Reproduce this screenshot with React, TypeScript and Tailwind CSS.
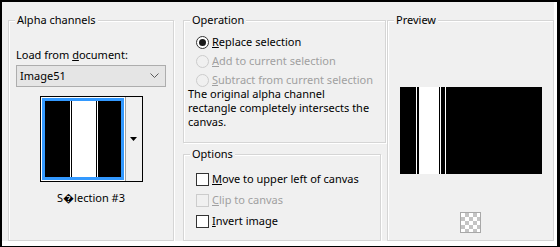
import type { ReactNode } from 'react';

function Group({ title, className, children }: { title: string; className?: string; children: ReactNode }) {
  return (
    <fieldset
      className={`border border-[#d5d5d5] px-0 shadow-[inset_1px_1px_0_#ffffff,1px_1px_0_#ffffff] ${className ?? ''}`}
    >
      <legend className="ml-[6px] bg-[#f0f0f0] px-[2px] leading-[16px] text-black">{title}</legend>
      {children}
    </fieldset>
  );
}

function Radio({ label, hot, checked, disabled }: { label: string; hot: string; checked?: boolean; disabled?: boolean }) {
  return (
    <div className="flex h-[19px] items-center gap-[3px] whitespace-nowrap">
      <span
        className={`flex h-[13px] w-[13px] items-center justify-center rounded-full border ${
          disabled ? 'border-[#cccccc] bg-[#f0f0f0]' : 'border-[#333333] bg-white'
        }`}
      >
        {checked && <span className="h-[7px] w-[7px] rounded-full bg-[#1a1a1a]" />}
      </span>
      <span className={disabled ? 'text-[#a0a0a0]' : 'text-black'}>
        <u className="underline-offset-[1px]">{hot}</u>
        {label.slice(1)}
      </span>
    </div>
  );
}

function Check({ label, hot, disabled }: { label: string; hot: string; disabled?: boolean }) {
  return (
    <div className="flex h-[21px] items-center gap-[3px] whitespace-nowrap">
      <span
        className={`h-[13px] w-[13px] border ${disabled ? 'border-[#cccccc] bg-[#f0f0f0]' : 'border-[#333333] bg-white'}`}
      />
      <span className={disabled ? 'text-[#a0a0a0]' : 'text-black'}>
        <u className="underline-offset-[1px]">{hot}</u>
        {label.slice(1)}
      </span>
    </div>
  );
}

// stripe pattern of the selection thumbnail: [colour, width]
const thumbBars: [string, number][] = [
  ['#000', 25],
  ['#fff', 1],
  ['#000', 1],
  ['#fff', 24],
  ['#000', 1],
  ['#fff', 1],
  ['#000', 23],
];

const previewBars: [string, number][] = [
  ['#000', 16],
  ['#fff', 1],
  ['#000', 2],
  ['#fff', 20],
  ['#000', 1],
  ['#fff', 1],
  ['#000', 4],
  ['#fff', 1],
  ['#000', 96],
];

function Bars({ bars }: { bars: [string, number][] }) {
  return (
    <div className="flex h-full w-full">
      {bars.map(([c, w], i) => (
        <div key={i} className="h-full shrink-0" style={{ background: c, width: w }} />
      ))}
    </div>
  );
}

export default function App() {
  return (
    <div className="h-[247px] w-[560px] bg-black pb-[1px] pl-[2px] pr-[3px] pt-[2px] font-['Noto_Sans',sans-serif] text-[11px] text-black">
      <div className="flex h-full border-b-[5px] border-r-[3px] border-white bg-[#f0f0f0] pl-[6px] pt-[10px]">
        {/* Alpha channels */}
        <Group title="Alpha channels" className="h-[229px] w-[166px]">
          <div className="flex flex-col px-[7px]">
            <div className="mt-[19px] leading-[16px]">
              Load from <u className="underline-offset-[1px]">d</u>ocument:
            </div>
            <div className="mt-[2px] flex h-[22px] items-center justify-between border border-[#adadad] bg-[#e5e5e5] pl-[3px] pr-[6px]">
              <span>Image51</span>
              <svg width="9" height="6" viewBox="0 0 9 6">
                <polyline points="0.5,0.5 4.5,4.5 8.5,0.5" fill="none" stroke="#5a5a5a" strokeWidth="1" />
              </svg>
            </div>
            <div className="mx-auto mt-[9px] flex h-[86px] w-[103px] border border-black bg-white">
              <div className="m-[1px] flex h-[82px] w-[82px] border-[3px] border-[#3399ff] bg-black">
                <Bars bars={thumbBars} />
              </div>
              <div className="flex flex-1 items-center justify-center border-l border-[#a0a0a0] bg-[#f0f0f0]">
                <svg width="7" height="4" viewBox="0 0 7 4">
                  <polygon points="0,0 7,0 3.5,4" fill="#000" />
                </svg>
              </div>
            </div>
            <div className="mt-[8px] text-center leading-[16px]">S{'\uFFFD'}lection #3</div>
          </div>
        </Group>

        <div className="ml-[9px] flex w-[198px] flex-col">
          <Group title="Operation" className="h-[131px]">
            <div className="px-[12px] pt-[5px]">
              <Radio label="Replace selection" hot="R" checked />
              <Radio label="Add to current selection" hot="A" disabled />
              <Radio label="Subtract from current selection" hot="S" disabled />
            </div>
            <p className="-mt-[3px] whitespace-nowrap px-[4px] leading-[14px]">
              The original alpha channel
              <br />
              rectangle completely intersects the
              <br />
              canvas.
            </p>
          </Group>
          <Group title="Options" className="mt-[3px] h-[95px]">
            <div className="px-[12px] pt-[7px]">
              <Check label="Move to upper left of canvas" hot="M" />
              <Check label="Clip to canvas" hot="C" disabled />
              <Check label="Invert image" hot="I" />
            </div>
          </Group>
        </div>

        <Group title="Preview" className="ml-[6px] h-[229px] w-[167px]">
          <div className="flex flex-col items-center">
            <div className="mt-[59px] h-[87px] w-[142px] overflow-hidden bg-black">
              <Bars bars={previewBars} />
            </div>
            <div className="mt-[38px] h-[21px] w-[21px] border border-[#a8a8a8] bg-[conic-gradient(#c4c4c4_25%,#ffffff_0_50%,#c4c4c4_0_75%,#ffffff_0)] bg-[length:8px_8px]" />
          </div>
        </Group>
      </div>
    </div>
  );
}
